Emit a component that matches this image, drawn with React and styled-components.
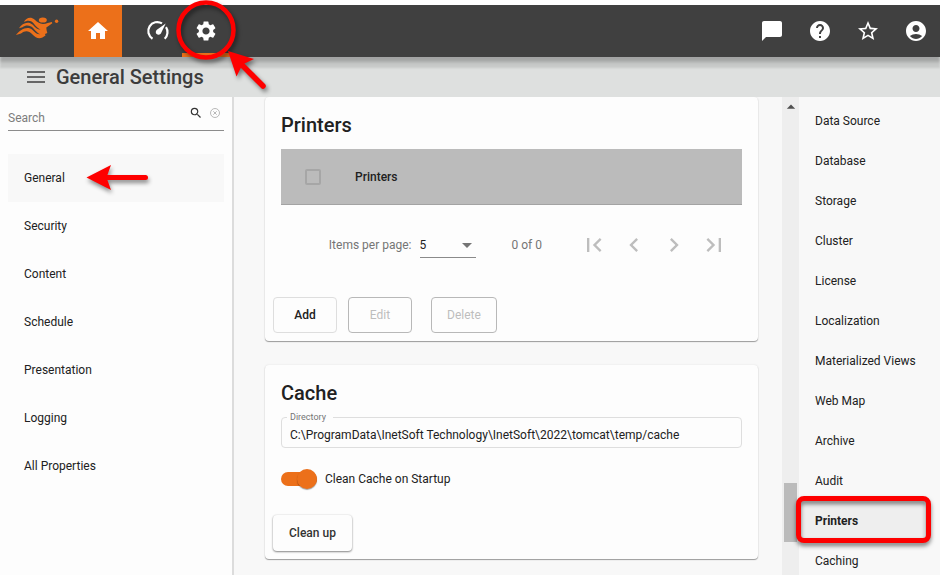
import React, { useState } from "react";
import styled, { createGlobalStyle } from "styled-components";
import {
  MdAccountCircle,
  MdArrowDropDown,
  MdArrowDropUp,
  MdChatBubble,
  MdChevronLeft,
  MdChevronRight,
  MdFirstPage,
  MdHelp,
  MdHome,
  MdLastPage,
  MdMenu,
  MdSearch,
  MdSettings,
  MdStarBorder,
} from "react-icons/md";

const ORANGE = "#ec701a";
const RED = "#fe0000";

const GlobalStyle = createGlobalStyle`
  *, *::before, *::after { box-sizing: border-box; }
  body {
    margin: 0;
    background: #ffffff;
    color: #212121;
    font: 400 12px/16px Roboto, "Liberation Sans", sans-serif;
  }
  button, input, select { font: inherit; color: inherit; }
  h1, h2, ul { margin: 0; padding: 0; }
  ul { list-style: none; }
  a { color: inherit; text-decoration: none; }
  svg { display: block; flex: none; }
`;

const Page = styled.div`
  display: flex;
  flex-direction: column;
  height: 100vh;
  padding-top: 5px;
  overflow: hidden;
`;

const TopBar = styled.header`
  position: relative;
  z-index: 2;
  display: flex;
  flex: none;
  height: 52px;
  background: #404040;
  color: #ffffff;
  box-shadow: 0 5px 3px rgba(0, 0, 0, 0.18), 0 11px 2px rgba(0, 0, 0, 0.1);
`;

const Brand = styled.a`
  display: flex;
  width: 74px;
  padding: 10px 0 0 15px;
`;

const NavTab = styled.a`
  position: relative;
  display: flex;
  align-items: center;
  justify-content: center;
  width: 48px;
  margin-left: ${(p) => (p.$spaced ? "12px" : "0")};
  background: ${(p) => (p.$filled ? ORANGE : "transparent")};
  border-bottom: 4px solid ${(p) => (p.$filled || p.$current ? ORANGE : "transparent")};
  padding-top: 4px;
`;

const Tools = styled.div`
  display: flex;
  margin-left: auto;
`;

const ToolButton = styled.button`
  display: flex;
  align-items: center;
  justify-content: center;
  width: 48px;
  padding: 0;
  border: 0;
  background: none;
`;

const CircleMark = styled.svg`
  position: absolute;
  left: -8px;
  top: -7px;
  z-index: 3;
  pointer-events: none;
  filter: drop-shadow(2px 3px 2px rgba(0, 0, 0, 0.45));
`;

const TitleBar = styled.div`
  display: flex;
  flex: none;
  align-items: center;
  gap: 8px;
  height: 40px;
  padding-left: 24px;
  background: #dee0df;
`;

const MenuButton = styled.button`
  position: relative;
  z-index: 3;
  display: flex;
  padding: 0;
  border: 0;
  background: none;
  color: #666666;
`;

const PageTitle = styled.h1`
  position: relative;
  z-index: 3;
  font-size: 20px;
  font-weight: 500;
  line-height: 24px;
  color: #3c3c3c;
`;

const Body = styled.div`
  display: flex;
  flex: 1;
  min-height: 0;
`;

const Sidebar = styled.nav`
  flex: none;
  width: 234px;
  padding: 0 8px;
  background: #fdfdfd;
  border-right: 2px solid #dcdcdc;
`;

const SearchRow = styled.label`
  display: flex;
  gap: 7px;
  height: 34px;
  padding: 9px 4px 0 0;
  border-bottom: 1px solid #8c8c8c;
  color: #333333;
`;

const SearchInput = styled.input`
  flex: 1;
  min-width: 0;
  height: 16px;
  margin-top: 4px;
  padding: 0;
  border: 0;
  outline: 0;
  background: none;
  &::placeholder { color: #7c7c7c; opacity: 1; }
`;

const ClearButton = styled.button`
  display: flex;
  height: 14px;
  padding: 2px 0 0;
  border: 0;
  background: none;
  color: #b0b0b0;
`;

const SideList = styled.ul`
  padding-top: 23px;
`;

const SideLink = styled.a`
  position: relative;
  display: flex;
  align-items: center;
  height: 48px;
  padding: 0 16px;
  background: ${(p) => (p.$active ? "#f8f8f8" : "transparent")};
`;

const ArrowMark = styled.svg`
  position: absolute;
  left: 74px;
  top: 8px;
  pointer-events: none;
  filter: drop-shadow(1px 3px 2px rgba(0, 0, 0, 0.45));
`;

const Content = styled.main`
  display: flex;
  flex: 1;
  flex-direction: column;
  gap: 24px;
  min-width: 0;
  padding: 0 24px 24px 31px;
  overflow: hidden;
  background: #f8f8f8;
`;

const Card = styled.section`
  flex: none;
  padding: 16px 16px 8px;
  background: #fdfdfd;
  border-radius: 4px;
  box-shadow: 0 1px 1px rgba(0, 0, 0, 0.36), 0 0 2px rgba(0, 0, 0, 0.1);
`;

const CardTitle = styled.h2`
  font-size: 20px;
  font-weight: 500;
  line-height: 24px;
`;

const Table = styled.table`
  width: 100%;
  margin-top: 12px;
  border-collapse: separate;
  border-spacing: 0;
  background: #bbbbbb;
`;

const HeadCell = styled.th`
  width: ${(p) => (p.$tick ? "74px" : "auto")};
  height: 56px;
  padding: ${(p) => (p.$tick ? "0 0 0 24px" : "0")};
  border-bottom: 1px solid #a3a3a3;
  font-weight: 500;
  text-align: left;
`;

const TickBox = styled.input.attrs({ type: "checkbox" })`
  display: block;
  appearance: none;
  width: 16px;
  height: 16px;
  margin: 0;
  border: 2px solid #a6a6a6;
  border-radius: 2px;
`;

const Paginator = styled.div`
  display: flex;
  align-items: center;
  justify-content: flex-end;
  height: 80px;
  padding-right: 8px;
  color: #757575;
`;

const PageSize = styled.div`
  position: relative;
  display: flex;
  align-items: center;
  width: 56px;
  height: 26px;
  margin-left: 8px;
  border-bottom: 1px solid #8a8a8a;
  svg { position: absolute; right: -3px; pointer-events: none; }
`;

const Select = styled.select`
  appearance: none;
  width: 100%;
  padding: 0;
  border: 0;
  outline: 0;
  background: none;
  color: #212121;
`;

const Range = styled.span`
  margin: 0 32px 0 36px;
`;

const PageButton = styled.button`
  display: flex;
  align-items: center;
  justify-content: center;
  width: 40px;
  height: 40px;
  padding: 0;
  border: 0;
  background: none;
  color: #bdbdbd;
`;

const Actions = styled.div`
  display: flex;
  margin: ${(p) => (p.$tall ? "28px" : "12px")} -8px 0;
`;

const Button = styled.button`
  height: 36px;
  min-width: 64px;
  margin-right: ${(p) => (p.$wide ? "19px" : "11px")};
  padding: 0 15px;
  border: 1px solid #dedede;
  border-radius: 4px;
  background: #fdfdfd;
  font-weight: 500;
  &:disabled { border-color: #b8b8b8; color: #bdbdbd; font-weight: 400; }
`;

const RaisedButton = styled(Button)`
  padding: 0 16px;
  border: 0;
  color: #333333;
  box-shadow: 0 1px 2px rgba(0, 0, 0, 0.45), 0 0 2px rgba(0, 0, 0, 0.12);
`;

const Field = styled.fieldset`
  min-width: 0;
  margin: 6px 0 0;
  padding: 4px 8px;
  border: 1px solid #dedede;
  border-radius: 4px;
`;

const Legend = styled.legend`
  margin-left: -3px;
  padding: 0 7px 0 3px;
  font-size: 9px;
  line-height: 12px;
  color: #757575;
`;

const FieldInput = styled.input`
  display: block;
  width: 100%;
  height: 16px;
  padding: 0;
  border: 0;
  outline: 0;
  background: none;
`;

const Toggle = styled.label`
  display: flex;
  align-items: center;
  gap: 8px;
  width: max-content;
  margin-top: 23px;
`;

const Switch = styled.input.attrs({ type: "checkbox", role: "switch" })`
  appearance: none;
  display: flex;
  align-items: center;
  justify-content: ${(p) => (p.checked ? "flex-end" : "flex-start")};
  width: 36px;
  height: 14px;
  margin: 0;
  border-radius: 7px;
  background: ${(p) => (p.checked ? ORANGE : "#b8b8b8")};
  &::before {
    content: "";
    flex: none;
    width: 20px;
    height: 20px;
    border-radius: 50%;
    background: ${(p) => (p.checked ? ORANGE : "#fafafa")};
    box-shadow: 0 1px 1px rgba(0, 0, 0, 0.35);
  }
`;

const ScrollTrack = styled.div`
  display: flex;
  flex: none;
  flex-direction: column;
  align-items: center;
  justify-content: space-between;
  width: 17px;
  padding-bottom: 33px;
  background: #eeeeee;
  color: #505050;
`;

const ScrollThumb = styled.div`
  width: 13px;
  height: 59px;
  background: #bbbbbb;
`;

const Outline = styled.nav`
  flex: none;
  width: 141px;
  padding: 4px 16px 0 0;
  background: #f8f8f8;
`;

const OutlineLink = styled.a`
  position: relative;
  display: flex;
  align-items: center;
  height: 40px;
  padding-left: 16px;
  background: ${(p) => (p.$active ? "#eeeeee" : "transparent")};
  font-weight: ${(p) => (p.$active ? 700 : 400)};
  white-space: nowrap;
`;

const BoxMark = styled.span`
  position: absolute;
  inset: -5px -7px -2px -3px;
  border: 5px solid ${RED};
  border-radius: 8px;
  pointer-events: none;
  filter: drop-shadow(0 3px 2px rgba(0, 0, 0, 0.5));
`;

function Logo() {
  return (
    <svg width="46" height="27" viewBox="0 0 46 27" fill={ORANGE} aria-hidden="true">
      <path d="M8.800 7.300C11 2.800 15.500 1.300 19.500 4.500C22 6.800 24.500 9 28 9C31 9 34.500 7.300 36.800 7L37.300 8.300L33.500 11L31.300 12.600L31.600 15.300L32.300 18L30 19L30.500 20.500L27.500 22.600C23.500 24 20.500 22.700 17.500 19.500C13.500 15.200 10 15.300 6 18.500L1 20C4.500 14.800 12.500 10.200 17.500 15C20.300 18 22.500 19.600 25 19.300C22.500 18 20.500 16 18.500 13.500C15 9.500 10.500 10 7.500 12.200L4 13.300C7 8.300 13 5.500 17.800 9.700C20.500 12.600 22.500 14.800 25.500 14.600C23 13.400 20.500 10.700 18.500 8.200C15.500 5 12 5.300 8.800 7.300Z" />
      <ellipse cx="27.800" cy="5" rx="4" ry="2.600" />
      <circle cx="41.600" cy="6.200" r="1.700" />
    </svg>
  );
}

function GaugeIcon() {
  return (
    <svg width="24" height="24" viewBox="0 0 24 24" fill="none" aria-hidden="true">
      <path d="M6.500 19.700A9 9 0 0 1 16 4.400M20 8.200A9 9 0 0 1 18.700 19.700" stroke="#fff" strokeWidth="2.200" />
      <path d="M19.700 4.500L14.900 14.600A2.800 2.800 0 1 1 10.900 10.800Z" fill="#fff" />
    </svg>
  );
}

function SettingsMark() {
  return (
    <CircleMark width="100" height="100" viewBox="0 0 100 100" aria-hidden="true">
      <circle cx="32" cy="32" r="27.500" fill="none" stroke={RED} strokeWidth="4.500" />
      <path d="M66 65L89 88" stroke={RED} strokeWidth="5.500" strokeLinecap="round" />
      <path d="M54 53L80 61L68.500 66.500L62.500 78.500Z" fill={RED} />
    </CircleMark>
  );
}

function LeftArrowMark() {
  return (
    <ArrowMark width="72" height="34" viewBox="0 0 72 34" aria-hidden="true">
      <path d="M22 15.500H63.500" stroke={RED} strokeWidth="5" strokeLinecap="round" />
      <path d="M4.500 15.500L29 3L24.500 15.500L29 28Z" fill={RED} />
    </ArrowMark>
  );
}

function ClearIcon() {
  return (
    <svg width="10" height="10" viewBox="0 0 10 10" fill="none" stroke="currentColor" aria-hidden="true">
      <circle cx="5" cy="5" r="4.500" strokeWidth="0.900" />
      <path d="M3.300 3.300L6.700 6.700M6.700 3.300L3.300 6.700" strokeWidth="0.900" />
    </svg>
  );
}

const tools = [
  ["Messages", MdChatBubble],
  ["Help", MdHelp],
  ["Favorites", MdStarBorder],
  ["Account", MdAccountCircle],
];

const sections = ["General", "Security", "Content", "Schedule", "Presentation", "Logging", "All Properties"];

const outline = [
  "Data Source", "Database", "Storage", "Cluster", "License", "Localization",
  "Materialized Views", "Web Map", "Archive", "Audit", "Printers", "Caching",
];

const pageButtons = [
  ["First page", MdFirstPage],
  ["Previous page", MdChevronLeft],
  ["Next page", MdChevronRight],
  ["Last page", MdLastPage],
];

export default function App() {
  const [directory, setDirectory] = useState(
    "C:\\ProgramData\\InetSoft Technology\\InetSoft\\2022\\tomcat\\temp/cache"
  );
  const [clean, setClean] = useState(true);

  return (
    <>
      <GlobalStyle />
      <Page>
        <TopBar>
          <Brand href="#" aria-label="InetSoft"><Logo /></Brand>
          <NavTab href="#home" $filled aria-label="Home"><MdHome size={24} /></NavTab>
          <NavTab href="#monitoring" $spaced aria-label="Monitoring"><GaugeIcon /></NavTab>
          <NavTab href="#settings" $current aria-label="Settings">
            <MdSettings size={24} />
            <SettingsMark />
          </NavTab>
          <Tools>
            {tools.map(([label, Icon]) => (
              <ToolButton key={label} type="button" aria-label={label}><Icon size={24} /></ToolButton>
            ))}
          </Tools>
        </TopBar>

        <TitleBar>
          <MenuButton type="button" aria-label="Toggle menu"><MdMenu size={24} /></MenuButton>
          <PageTitle>General Settings</PageTitle>
        </TitleBar>

        <Body>
          <Sidebar aria-label="Settings">
            <SearchRow>
              <SearchInput type="text" placeholder="Search" aria-label="Search" />
              <MdSearch size={14} />
              <ClearButton type="button" aria-label="Clear search"><ClearIcon /></ClearButton>
            </SearchRow>
            <SideList>
              {sections.map((name) => (
                <li key={name}>
                  <SideLink href={`#${name}`} $active={name === "General"}>
                    {name}
                    {name === "General" && <LeftArrowMark />}
                  </SideLink>
                </li>
              ))}
            </SideList>
          </Sidebar>

          <Content>
            <Card>
              <CardTitle>Printers</CardTitle>
              <Table>
                <thead>
                  <tr>
                    <HeadCell $tick><TickBox aria-label="Select all printers" /></HeadCell>
                    <HeadCell>Printers</HeadCell>
                  </tr>
                </thead>
              </Table>
              <Paginator>
                <label htmlFor="page-size">Items per page:</label>
                <PageSize>
                  <Select id="page-size" defaultValue="5">
                    <option>5</option>
                    <option>10</option>
                  </Select>
                  <MdArrowDropDown size={24} />
                </PageSize>
                <Range>0 of 0</Range>
                {pageButtons.map(([label, Icon]) => (
                  <PageButton key={label} type="button" disabled aria-label={label}><Icon size={28} /></PageButton>
                ))}
              </Paginator>
              <Actions>
                <Button type="button">Add</Button>
                <Button type="button" disabled $wide>Edit</Button>
                <Button type="button" disabled>Delete</Button>
              </Actions>
            </Card>

            <Card>
              <CardTitle>Cache</CardTitle>
              <Field>
                <Legend><label htmlFor="directory">Directory</label></Legend>
                <FieldInput id="directory" value={directory} onChange={(e) => setDirectory(e.target.value)} />
              </Field>
              <Toggle>
                <Switch checked={clean} onChange={(e) => setClean(e.target.checked)} />
                Clean Cache on Startup
              </Toggle>
              <Actions $tall>
                <RaisedButton type="button">Clean up</RaisedButton>
              </Actions>
            </Card>
          </Content>

          <ScrollTrack aria-hidden="true">
            <MdArrowDropUp size={20} />
            <ScrollThumb />
          </ScrollTrack>

          <Outline aria-label="On this page">
            <ul>
              {outline.map((name) => (
                <li key={name}>
                  <OutlineLink href={`#${name}`} $active={name === "Printers"}>
                    {name}
                    {name === "Printers" && <BoxMark />}
                  </OutlineLink>
                </li>
              ))}
            </ul>
          </Outline>
        </Body>
      </Page>
    </>
  );
}
